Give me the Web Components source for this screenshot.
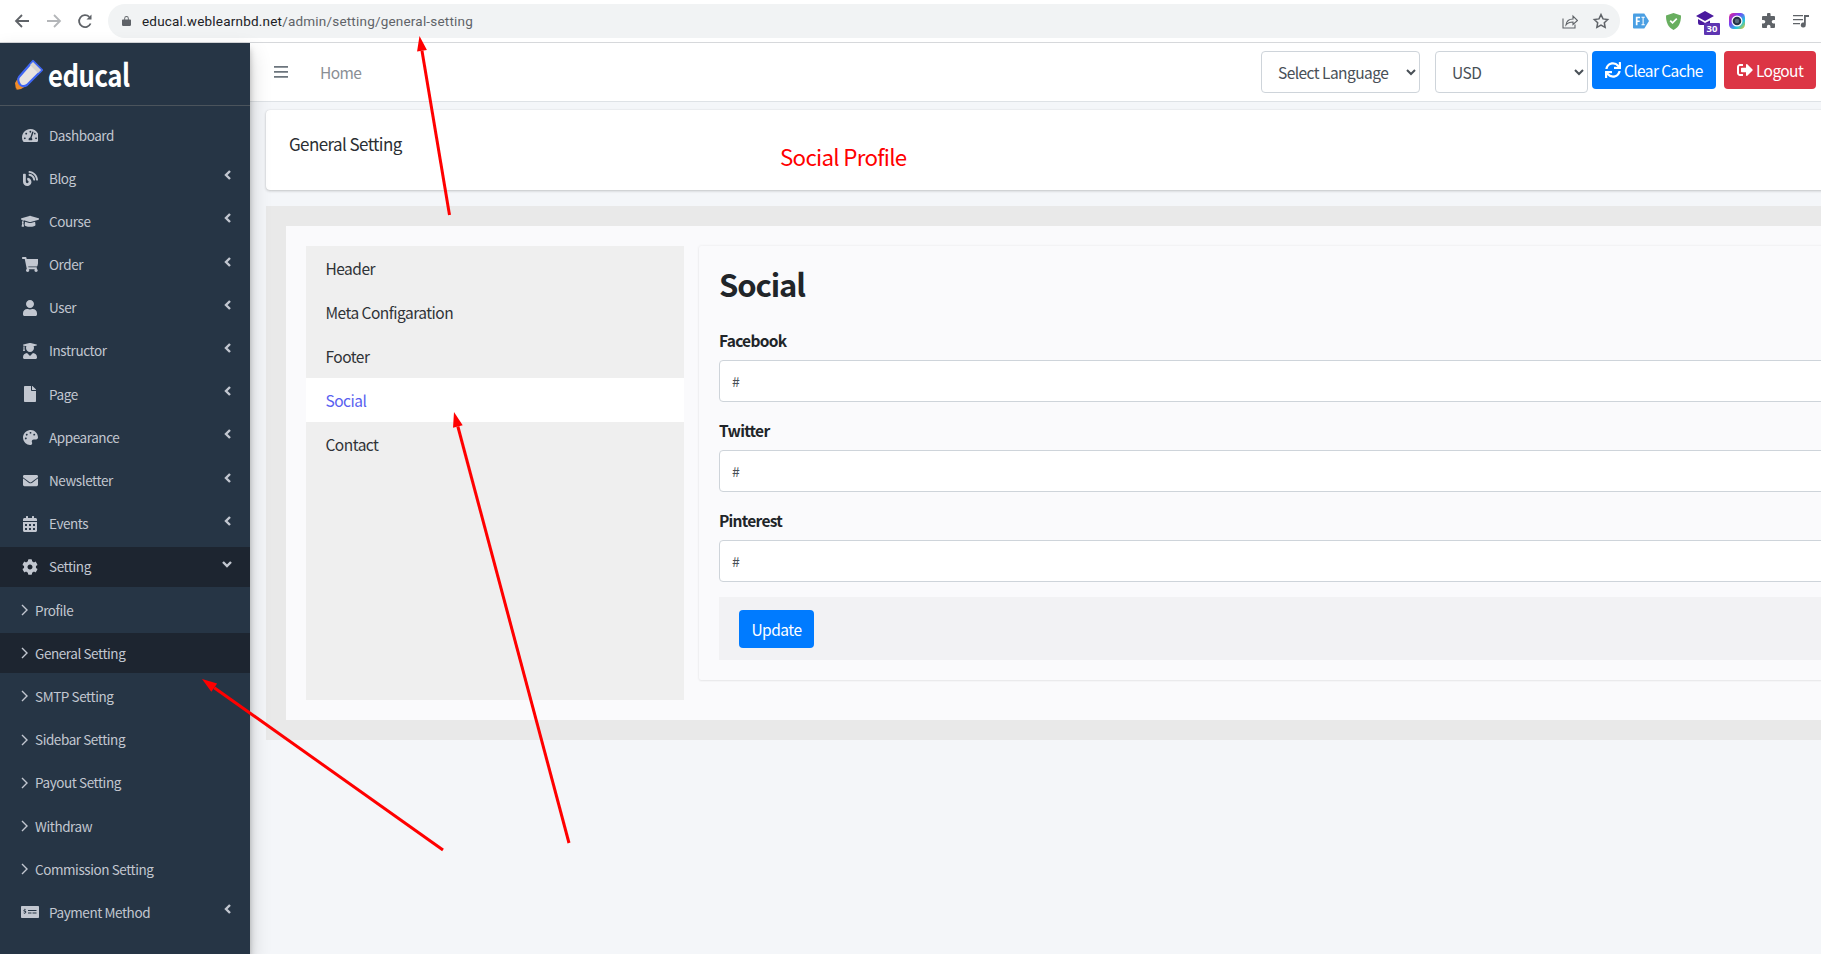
<!DOCTYPE html>
<html lang="en">
<head>
<meta charset="utf-8">
<title>General Setting</title>
<style>
  html, body { margin: 0; height: 954px; overflow: hidden; background: #fff; }
  body { font-family: "Noto Sans CJK SC", "Noto Sans", sans-serif; font-size: 15.5px; letter-spacing: -.48px; line-height: 24px; color: #212529; position: relative; }
  .row { display: flex; height: 911px; }
</style>
</head>
<body>
<browser-bar url-host="educal.weblearnbd.net" url-path="/admin/setting/general-setting"></browser-bar>
<div class="row">
  <side-nav>
    <side-item icon="dashboard">Dashboard</side-item>
    <side-item icon="blog" caret="left">Blog</side-item>
    <side-item icon="course" caret="left">Course</side-item>
    <side-item icon="cart" caret="left">Order</side-item>
    <side-item icon="user" caret="left">User</side-item>
    <side-item icon="instructor" caret="left">Instructor</side-item>
    <side-item icon="file" caret="left">Page</side-item>
    <side-item icon="palette" caret="left">Appearance</side-item>
    <side-item icon="mail" caret="left">Newsletter</side-item>
    <side-item icon="calendar" caret="left">Events</side-item>
    <side-item icon="cog" caret="down" active>Setting</side-item>
    <side-item sub>Profile</side-item>
    <side-item sub active>General Setting</side-item>
    <side-item sub>SMTP Setting</side-item>
    <side-item sub>Sidebar Setting</side-item>
    <side-item sub>Payout Setting</side-item>
    <side-item sub>Withdraw</side-item>
    <side-item sub>Commission Setting</side-item>
    <side-item icon="money" caret="left">Payment Method</side-item>
  </side-nav>
  <main-area>
    <top-nav slot="top"></top-nav>
    <title-card>General Setting</title-card>
    <settings-panel>
      <tab-list slot="tabs">
        <tab-link>Header</tab-link>
        <tab-link>Meta Configaration</tab-link>
        <tab-link>Footer</tab-link>
        <tab-link active>Social</tab-link>
        <tab-link>Contact</tab-link>
      </tab-list>
      <social-form slot="form">
        <form-field label="Facebook"></form-field>
        <form-field label="Twitter"></form-field>
        <form-field label="Pinterest"></form-field>
      </social-form>
    </settings-panel>
  </main-area>
</div>
<note-layer></note-layer>

<script>
const ICONS = {
  dashboard: ["0 0 576 512", "M288 32C128.94 32 0 160.94 0 320c0 52.8 14.25 102.26 39.06 144.8 5.61 9.62 16.3 15.2 27.44 15.2h443c11.14 0 21.83-5.58 27.44-15.2C561.75 422.26 576 372.8 576 320c0-159.06-128.94-288-288-288zm0 64c14.71 0 26.58 10.13 30.32 23.65-1.11 2.26-2.64 4.23-3.45 6.67l-9.22 27.67c-5.13 3.49-10.97 6.01-17.64 6.01-17.67 0-32-14.33-32-32S270.33 96 288 96zM96 384c-17.67 0-32-14.33-32-32s14.33-32 32-32 32 14.33 32 32-14.33 32-32 32zm48-160c-17.67 0-32-14.33-32-32s14.33-32 32-32 32 14.33 32 32-14.33 32-32 32zm246.77-72.41l-61.33 184C343.13 347.33 352 364.54 352 384c0 11.72-3.38 22.55-8.88 32H232.88c-5.5-9.45-8.88-20.28-8.88-32 0-33.94 26.5-61.43 59.9-63.59l61.34-184.01c4.17-12.56 17.73-19.45 30.36-15.17 12.57 4.19 19.35 17.79 15.17 30.36zm14.66 57.2l15.52-46.55c3.47-1.29 7.13-2.23 11.05-2.23 17.67 0 32 14.33 32 32s-14.33 32-32 32c-11.38-.01-20.89-6.28-26.57-15.22zM480 384c-17.67 0-32-14.33-32-32s14.33-32 32-32 32 14.33 32 32-14.33 32-32 32z"],
  blog: ["0 0 512 512", "M172.200 226.800c-14.600-2.900-28.200 8.900-28.200 23.800V301c0 10.200 7.100 18.400 16.700 22 18.200 6.800 31.300 24.400 31.300 45 0 26.500-21.500 48-48 48s-48-21.500-48-48V120c0-13.300-10.700-24-24-24H24c-13.300 0-24 10.700-24 24v248c0 89.500 82.100 160.200 175 140.700 54.400-11.400 98.300-55.400 109.700-109.700 17.400-82.900-37-157.200-112.500-172.200zM209 0c-9.200-.5-17 6.800-17 16v31.600c0 8.500 6.600 15.500 15 15.900 129.400 7 233.100 112 240.900 241.500.5 8.400 7.500 15 15.900 15h32.100c9.200 0 16.500-7.800 16-17C503.900 139.400 372.600 8 209 0zm.3 96c-9.300-.7-17.300 6.700-17.300 16.100v32.100c0 8.400 6.500 15.300 14.800 15.900 76.800 6.300 138 68.200 144.900 145.200.8 8.300 7.600 14.700 15.900 14.700h32.200c9.300 0 16.800-8 16.100-17.300-8.400-110.100-96.500-198.200-206.600-206.700z"],
  course: ["0 0 640 512", "M622.340 153.200L343.400 67.500c-15.200-4.670-31.600-4.670-46.790 0L17.660 153.200c-23.540 7.230-23.540 38.360 0 45.590l48.630 14.940c-10.670 13.190-17.230 29.280-17.880 46.900C38.780 266.150 32 276.110 32 288c0 10.780 5.680 19.850 13.860 25.650L20.330 428.530C18.110 438.520 25.710 448 35.940 448h56.110c10.240 0 17.840-9.480 15.620-19.470L82.140 313.650C90.320 307.850 96 298.780 96 288c0-11.570-6.470-21.250-15.660-26.870.76-15.020 8.440-28.300 20.690-36.720L296.600 284.500c9.060 2.780 26.440 6.250 46.790 0l278.950-85.700c23.550-7.240 23.550-38.370 0-45.600zM352.790 315.090c-28.530 8.760-52.840 3.920-65.590 0l-145.020-44.550L128 384c0 35.350 85.960 64 192 64s192-28.650 192-64l-14.180-113.470-145.030 44.560z"],
  cart: ["0 0 576 512", "M528.120 301.320l47.270-208C578.800 78.300 567.390 64 551.990 64H159.210l-9.170-44.810C147.760 8.020 137.930 0 126.530 0H24C10.750 0 0 10.750 0 24v16c0 13.250 10.750 24 24 24h69.880l70.250 343.430C147.320 417.100 136 435.220 136 456c0 30.930 25.070 56 56 56s56-25.070 56-56c0-15.670-6.440-29.830-16.810-40h209.630C430.440 426.170 424 440.330 424 456c0 30.930 25.070 56 56 56s56-25.070 56-56c0-22.170-12.890-41.330-31.580-50.410l5.520-24.280c3.410-15.020-8-29.310-23.400-29.310H218.170l-6.550-32h293.100c11.210 0 20.920-7.760 23.400-18.680z"],
  user: ["0 0 448 512", "M224 256c70.700 0 128-57.300 128-128S294.700 0 224 0 96 57.300 96 128s57.300 128 128 128zm89.600 32h-16.700c-22.200 10.200-46.900 16-72.900 16s-50.600-5.800-72.900-16h-16.700C60.200 288 0 348.200 0 422.400V464c0 26.500 21.500 48 48 48h352c26.500 0 48-21.500 48-48v-41.600c0-74.200-60.200-134.400-134.400-134.400z"],
  instructor: ["0 0 448 512", "M319.400 320.600L224 416l-95.400-95.400C57.100 323.700 0 382.200 0 454.400v9.600c0 26.500 21.500 48 48 48h352c26.500 0 48-21.500 48-48v-9.600c0-72.200-57.100-130.700-128.600-133.800zM13.600 79.800l6.400 1.500v58.400c-7 4.200-12 11.500-12 20.300 0 8.400 4.600 15.400 11.100 19.700L3.500 242c-1.700 6.900 2.100 14 7.600 14h41.800c5.500 0 9.300-7.100 7.600-14l-15.600-62.300C51.400 175.400 56 168.400 56 160c0-8.800-5-16.100-12-20.300V87.100l66 15.900c-8.600 17.200-14 36.400-14 57 0 70.700 57.300 128 128 128s128-57.300 128-128c0-20.600-5.300-39.800-14-57l96.300-23.200c18.200-4.400 18.200-27.100 0-31.500l-190.400-46c-13-3.100-26.700-3.100-39.700 0L13.600 48.200c-18.100 4.400-18.100 27.200 0 31.600z"],
  file: ["0 0 384 512", "M224 136V0H24C10.700 0 0 10.700 0 24v464c0 13.300 10.700 24 24 24h336c13.300 0 24-10.700 24-24V160H248c-13.200 0-24-10.800-24-24zm160-14.100v6.100H256V0h6.100c6.400 0 12.500 2.500 17 7l97.900 98c4.500 4.500 7 10.600 7 16.900z"],
  palette: ["0 0 512 512", "M204.300 5C104.900 24.400 24.800 104.300 5.200 203.400c-37 187 131.700 326.400 258.800 306.700 41.200-6.400 61.400-54.600 42.500-91.700-23.100-45.400 9.900-98.400 60.900-98.400h79.700c35.800 0 64.800-29.600 64.900-65.300C511.500 97.100 368.100-26.900 204.300 5zM96 320c-17.700 0-32-14.300-32-32s14.300-32 32-32 32 14.300 32 32-14.300 32-32 32zm32-128c-17.700 0-32-14.300-32-32s14.300-32 32-32 32 14.300 32 32-14.300 32-32 32zm128-64c-17.700 0-32-14.300-32-32s14.300-32 32-32 32 14.300 32 32-14.300 32-32 32zm128 64c-17.700 0-32-14.300-32-32s14.300-32 32-32 32 14.300 32 32-14.300 32-32 32z"],
  mail: ["0 0 512 512", "M502.300 190.800c3.900-3.100 9.700-.2 9.700 4.700V400c0 26.500-21.500 48-48 48H48c-26.500 0-48-21.500-48-48V195.600c0-5 5.700-7.800 9.700-4.700 22.400 17.400 52.100 39.500 154.100 113.600 21.100 15.400 56.700 47.800 92.200 47.600 35.700.3 72-32.800 92.300-47.600 102-74.100 131.600-96.300 154-113.700zM256 320c23.200.4 56.600-29.200 73.400-41.400 132.700-96.300 142.800-104.700 173.400-128.700 5.800-4.500 9.200-11.500 9.200-18.900v-19c0-26.500-21.500-48-48-48H48C21.500 64 0 85.500 0 112v19c0 7.400 3.400 14.300 9.200 18.900 30.600 23.900 40.700 32.400 173.400 128.700 16.800 12.200 50.200 41.800 73.400 41.400z"],
  calendar: ["0 0 448 512", "M0 464c0 26.500 21.500 48 48 48h352c26.500 0 48-21.500 48-48V192H0v272zm320-196c0-6.600 5.400-12 12-12h40c6.600 0 12 5.400 12 12v40c0 6.600-5.400 12-12 12h-40c-6.600 0-12-5.400-12-12v-40zm0 128c0-6.600 5.400-12 12-12h40c6.600 0 12 5.400 12 12v40c0 6.600-5.400 12-12 12h-40c-6.600 0-12-5.400-12-12v-40zM192 268c0-6.600 5.400-12 12-12h40c6.600 0 12 5.400 12 12v40c0 6.600-5.400 12-12 12h-40c-6.600 0-12-5.400-12-12v-40zm0 128c0-6.600 5.400-12 12-12h40c6.600 0 12 5.400 12 12v40c0 6.600-5.400 12-12 12h-40c-6.600 0-12-5.400-12-12v-40zM64 268c0-6.600 5.400-12 12-12h40c6.600 0 12 5.400 12 12v40c0 6.600-5.400 12-12 12H76c-6.600 0-12-5.400-12-12v-40zm0 128c0-6.600 5.400-12 12-12h40c6.600 0 12 5.400 12 12v40c0 6.600-5.400 12-12 12H76c-6.600 0-12-5.400-12-12v-40zM400 64h-48V16c0-8.800-7.200-16-16-16h-32c-8.800 0-16 7.200-16 16v48H160V16c0-8.800-7.200-16-16-16h-32c-8.800 0-16 7.200-16 16v48H48C21.500 64 0 85.500 0 112v48h448v-48c0-26.500-21.500-48-48-48z"],
  cog: ["0 0 512 512", "M487.400 315.700l-42.600-24.600c4.300-23.200 4.300-47 0-70.200l42.600-24.600c4.900-2.800 7.100-8.600 5.500-14-11.100-35.600-30-67.800-54.700-94.600-3.800-4.100-10-5.100-14.800-2.300L380.800 110c-17.900-15.400-38.500-27.300-60.800-35.100V25.800c0-5.600-3.900-10.500-9.400-11.700-36.700-8.200-74.300-7.800-109.200 0-5.500 1.200-9.400 6.100-9.400 11.700V75c-22.200 7.900-42.800 19.800-60.800 35.100L88.700 85.500c-4.900-2.800-11-1.900-14.800 2.300-24.700 26.700-43.600 58.900-54.700 94.600-1.700 5.400.6 11.200 5.500 14L67.300 221c-4.300 23.200-4.300 47 0 70.200l-42.600 24.600c-4.900 2.800-7.100 8.600-5.500 14 11.100 35.600 30 67.800 54.700 94.600 3.800 4.100 10 5.100 14.800 2.300l42.600-24.600c17.900 15.400 38.500 27.300 60.800 35.100v49.200c0 5.600 3.900 10.500 9.400 11.700 36.700 8.200 74.300 7.800 109.200 0 5.500-1.200 9.400-6.100 9.400-11.700v-49.200c22.200-7.900 42.800-19.800 60.800-35.100l42.600 24.600c4.900 2.800 11 1.900 14.800-2.300 24.700-26.700 43.600-58.900 54.700-94.600 1.500-5.500-.7-11.300-5.600-14.100zM256 336c-44.100 0-80-35.900-80-80s35.900-80 80-80 80 35.900 80 80-35.900 80-80 80z"],
  money: ["0 0 36 24", "M1.500 0h33c.8 0 1.500.7 1.500 1.500v21c0 .8-.7 1.500-1.500 1.500h-33C.7 24 0 23.300 0 22.500v-21C0 .7.700 0 1.500 0zM7 5.500v1.300c-1.300.2-2.200 1.200-2.200 2.400 0 1.300 1 2.100 2.400 2.500 1 .3 1.300.6 1.300 1s-.4.8-1.100.8c-.7 0-1.400-.3-1.900-.7l-.7 1.200c.5.400 1.300.7 2.200.8V16h1.300v-1.300c1.300-.3 2.200-1.200 2.200-2.500s-.9-2.100-2.400-2.600c-1-.3-1.300-.5-1.300-.9s.4-.7 1-.7.1.3 1.700.6l.6-1.200c-.5-.3-1.200-.5-1.800-.6V5.500zM14 8v2h17V8zm0 5v2h7v-2zm9 0v2h8v-2z"],
  sync: ["0 0 512 512", "M440.650 12.570l4 82.770A247.160 247.160 0 0 0 255.830 8C134.730 8 33.910 94.920 12.290 209.820A12 12 0 0 0 24.090 224h49.050a12 12 0 0 0 11.670-9.260 175.910 175.910 0 0 1 317-56.940l-101.460-4.860a12 12 0 0 0-12.570 12v47.410a12 12 0 0 0 12 12H500a12 12 0 0 0 12-12V12a12 12 0 0 0-12-12h-47.370a12 12 0 0 0-11.980 12.570zM255.830 432a175.610 175.610 0 0 1-146-77.800l101.800 4.870a12 12 0 0 0 12.570-12v-47.400a12 12 0 0 0-12-12H12a12 12 0 0 0-12 12V500a12 12 0 0 0 12 12h47.350a12 12 0 0 0 12-12.600l-4.150-82.570A247.170 247.170 0 0 0 255.830 504c121.110 0 221.930-86.920 243.550-201.820a12 12 0 0 0-11.800-14.180h-49.050a12 12 0 0 0-11.670 9.260A175.860 175.860 0 0 1 255.830 432z"],
  signout: ["0 0 512 512", "M180 448H96c-53 0-96-43-96-96V160c0-53 43-96 96-96h84c6.600 0 12 5.400 12 12v40c0 6.600-5.400 12-12 12H96c-17.700 0-32 14.300-32 32v192c0 17.700 14.300 32 32 32h84c6.600 0 12 5.400 12 12v40c0 6.600-5.400 12-12 12zM497 273L329 441c-15 15-41 4.500-41-17v-96H152c-13.300 0-24-10.700-24-24v-96c0-13.300 10.700-24 24-24h136V88c0-21.400 25.900-32 41-17l168 168c9.300 9.400 9.300 24.600 0 34z"],
};

function iconSvg(name, size) {
  const [box, d] = ICONS[name];
  const [, , w, h] = box.split(" ").map(Number);
  const width = (size * w) / h;
  return `<svg viewBox="${box}" width="${width}" height="${size}" fill="currentColor" aria-hidden="true"><path d="${d}"/></svg>`;
}

class BrowserBar extends HTMLElement {
  connectedCallback() {
    this.attachShadow({ mode: "open" });
    this.shadowRoot.innerHTML = `
      <style>
        :host { display: flex; align-items: center; height: 42px; border-bottom: 1px solid #d6d8db; background: #fff; font-family: "Roboto", "Noto Sans", sans-serif; letter-spacing: 0; position: relative; }
        .nav { display: flex; align-items: center; gap: 14px; padding-left: 13px; width: 108px; flex: none; box-sizing: border-box; }
        .nav svg { display: block; }
        .omni { flex: none; width: 1512px; height: 34px; margin-top: -1px; border-radius: 17px; background: #f1f3f4; display: flex; align-items: center; box-sizing: border-box; padding: 0 10px 0 14px; }
        .lock { margin-right: 11px; flex: none; }
        .url { font-size: 13.5px; letter-spacing: .2px; color: #5f6368; flex: 1; white-space: nowrap; }
        .url b { font-weight: 400; color: #202124; }
        .omni .end { display: flex; align-items: center; gap: 14px; }
        .ext { display: grid; grid-template-columns: repeat(6, 32px); align-items: center; justify-items: center; padding-left: 5px; flex: none; }
        .ext > * { display: block; }
        .cap { position: absolute; left: 1704px; top: 23px; width: 16px; height: 12px; background: #5e35b1; border-radius: 1px; color: #fff; font: 700 9.500px/12px "Noto Sans", sans-serif; text-align: center; }
      </style>
      <div class="nav">
        <svg width="18" height="18" viewBox="0 0 18 18" fill="none" stroke="#5f6368" stroke-width="1.800"><path d="M16 9H3M9 3 3 9l6 6"/></svg>
        <svg width="18" height="18" viewBox="0 0 18 18" fill="none" stroke="#b4b6b9" stroke-width="1.800"><path d="M2 9h13M9 3l6 6-6 6"/></svg>
        <svg width="16" height="16" viewBox="0 0 16 16" fill="none" stroke="#5f6368" stroke-width="1.800"><path d="M13.600 10.500A6 6 0 1 1 12.300 3.800"/><path d="M14.500 1.500v5h-5z" fill="#5f6368" stroke="none"/></svg>
      </div>
      <div class="omni">
        <svg class="lock" width="9" height="11" viewBox="0 0 10 12"><path fill="#5f6368" d="M2.500 5V3.500a2.500 2.500 0 0 1 5 0V5H9c.5 0 1 .5 1 1v5c0 .5-.5 1-1 1H1c-.5 0-1-.5-1-1V6c0-.5.5-1 1-1zm1 0h3V3.500a1.500 1.500 0 0 0-3 0z"/></svg>
        <span class="url"><b>${this.getAttribute("url-host")}</b>${this.getAttribute("url-path")}</span>
        <div class="end">
          <svg width="16" height="16" viewBox="0 0 16 16" fill="none" stroke="#5f6368" stroke-width="1.100"><path d="M1 5.500V15h12v-3.500"/><path d="M4 12c.5-4 3-6 7-6V3l4.500 4.500L11 11.500V9c-3 0-5 .5-7 3z"/></svg>
          <svg width="18" height="18" viewBox="0 0 24 24" fill="none" stroke="#5f6368" stroke-width="2"><path d="M12 3.500l2.700 5.700 6.200.8-4.500 4.300 1.100 6.200L12 17.500l-5.500 3 1.100-6.200L3.100 10l6.200-.8z"/></svg>
        </div>
      </div>
      <div class="ext">
        <svg width="16" height="16" viewBox="0 0 17 16"><path fill="#4a9fe3" d="M1 0h11l5 8-5 8H1a1 1 0 0 1-1-1V1a1 1 0 0 1 1-1z"/><path fill="#fff" d="M3 3.500h4.500v1.600H4.800v2.300h2.300V9H4.800v3.500H3zM9 3.500h3.500v1H11.300v7h1.200v1H9v-1h1.200v-7H9z"/></svg>
        <svg width="15" height="17" viewBox="0 0 16 18"><path fill="#68ae5f" d="M8 0l8 2.500c0 7-2 12.500-8 15.500C2 15 0 9.500 0 2.500z"/><path fill="none" stroke="#fff" stroke-width="1.800" d="M4.500 8l2.500 2.500 4.500-4.500"/></svg>
        <svg width="18" height="15" viewBox="0 0 18 15" style="margin-top:-5px"><path fill="#4a1a9e" d="M9 0l9 5-9 5-9-5zM2 8l7 4 5-2.500V14H4a2 2 0 0 1-2-2z"/></svg>
        <svg width="16" height="16" viewBox="0 0 16 16"><defs><linearGradient id="g" x1="0" y1="0" x2="1" y2="1"><stop offset="0" stop-color="#e91e8c"/><stop offset=".35" stop-color="#7b3ff2"/><stop offset=".7" stop-color="#1ec8e0"/><stop offset="1" stop-color="#f5c518"/></linearGradient></defs><rect width="16" height="16" rx="4.500" fill="url(#g)"/><circle cx="8" cy="8" r="5.500" fill="#fff"/><circle cx="8" cy="8" r="4.300" fill="#263545"/><circle cx="8" cy="8" r="2.200" fill="#5a6b7d"/></svg>
        <svg width="16" height="16" viewBox="0 0 16 16"><path fill="#5f6368" d="M6 1.500a1.800 1.800 0 0 1 3.600 0V3H13a1 1 0 0 1 1 1v3h-1.500a1.800 1.800 0 0 0 0 3.600H14V14a1 1 0 0 1-1 1H9.500v-1.500a1.800 1.800 0 0 0-3.600 0V15H2a1 1 0 0 1-1-1v-3.500h1.500a1.800 1.800 0 0 0 0-3.600H1V4a1 1 0 0 1 1-1h4z"/></svg>
        <svg width="16" height="14" viewBox="0 0 16 14"><path fill="#5f6368" d="M0 1h10v1.300H0zM0 5h10v1.300H0zM0 9h7v1.300H0zM11 1h5v2h-3.200v8a2.500 2.500 0 1 1-1.800-2.400z"/></svg>
      </div>
      <div class="cap">30</div>
    `;
  }
}

class SideNav extends HTMLElement {
  connectedCallback() {
    this.attachShadow({ mode: "open" });
    this.shadowRoot.innerHTML = `
      <style>
        :host { display: block; flex: none; width: 250px; background: #263545; box-shadow: 0 10px 20px rgba(0,0,0,.19), 0 6px 6px rgba(0,0,0,.23); position: relative; z-index: 2; }
        .brand { display: flex; align-items: center; height: 62px; padding-left: 14px; border-bottom: 1px solid #4b545c; gap: 4px; }
        .brand span { display: inline-block; font-size: 31px; font-weight: 700; color: #fff; letter-spacing: -.6px; line-height: 40px; transform: scaleX(.83); transform-origin: left center; }
        .brand svg { display: block; margin-top: 2px; flex: none; }
        nav { padding-top: 9px; }
      </style>
      <div class="brand">
        <svg width="30" height="32" viewBox="0 0 30 32">
          <path fill="#f28c28" d="M2 31 1 24l3-5 8 8-5 3z"/>
          <path fill="#3a3a3a" d="M1 31l-.5-3 3 2.500z"/>
          <path fill="#e8e4e0" stroke="#3f66f2" stroke-width="2.200" stroke-linejoin="round" d="M5 18 19 2l9 9-15 15c-3 2-6 1-7-.5S3 21 5 18z"/>
          <path fill="#d6d2ce" d="M19 3l8 8-3 3-8-8z"/>
        </svg>
        <span>educal</span>
      </div>
      <nav><slot></slot></nav>
    `;
  }
}

class SideItem extends HTMLElement {
  connectedCallback() {
    this.attachShadow({ mode: "open" });
    const sub = this.hasAttribute("sub");
    const icon = this.getAttribute("icon");
    const caret = this.getAttribute("caret");
    const sizes = { cart: 15, money: 12, dashboard: 15, course: 14.5, blog: 15, palette: 15, mail: 15 };
    const ico = sub
      ? `<svg class="chev" width="7" height="12" viewBox="0 0 7 12" fill="none" stroke="currentColor" stroke-width="1.400"><path d="M1 1l5 5-5 5"/></svg>`
      : `<span class="ico">${iconSvg(icon, sizes[icon] || 16)}</span>`;
    const end = caret === "left"
      ? `<svg class="caret" width="7" height="10" viewBox="0 0 7 10" fill="none" stroke="currentColor" stroke-width="2.400"><path d="M6 1 2 5l4 4"/></svg>`
      : caret === "down"
      ? `<svg class="caret down" width="10" height="7" viewBox="0 0 10 7" fill="none" stroke="currentColor" stroke-width="2.400"><path d="M1 1l4 4 4-4"/></svg>`
      : "";
    this.shadowRoot.innerHTML = `
      <style>
        :host { display: flex; align-items: center; height: 40px; margin-bottom: 3.2px; color: #c2c7d0; font-size: 13.5px; letter-spacing: -.42px; position: relative; padding-left: ${sub ? 21 : 20}px; box-sizing: border-box; }
        :host([active]) { background: #1d2530; }
        .ico { width: 20px; margin-right: 9px; display: flex; justify-content: center; flex: none; }
        .ico svg { display: block; }
        .chev { margin-right: 7px; display: block; flex: none; }
        .text { line-height: 24px; white-space: nowrap; padding-bottom: 1px; }
        .caret { position: absolute; right: 19px; top: 12px; }
        .caret.down { right: 18px; top: 14px; }
      </style>
      ${ico}<span class="text"><slot></slot></span>${end}
    `;
  }
}

class MainArea extends HTMLElement {
  connectedCallback() {
    this.attachShadow({ mode: "open" });
    this.shadowRoot.innerHTML = `
      <style>
        :host { display: block; flex: 1; min-width: 0; background: #f4f6f9; overflow: hidden; }
        .body { padding: 8px 0 0 16px; width: 1700px; }
      </style>
      <slot name="top"></slot>
      <div class="body"><slot></slot></div>
    `;
  }
}

class TopNav extends HTMLElement {
  connectedCallback() {
    this.attachShadow({ mode: "open" });
    this.shadowRoot.innerHTML = `
      <style>
        :host { display: flex; align-items: flex-start; height: 58px; box-sizing: content-box; background: #fff; border-bottom: 1px solid #dee2e6; padding-right: 5px; }
        .burger { margin: 22px 0 0 24px; width: 14px; height: 14px; display: block; flex: none; }
        .home { margin: 17px 0 0 32px; color: #8a8f95; letter-spacing: -.6px; }
        .spacer { flex: 1; }
        select { height: 42px; margin-top: 8px; box-sizing: border-box; border: 1px solid #ced4da; border-radius: 4px; background: #fff; color: #495057; font: inherit; letter-spacing: -.55px; padding: 0 12px; }
        .lang { width: 159px; margin-right: 15px; }
        .cur { width: 153px; margin-right: 4px; }
        button { height: 38px; margin-top: 8px; border: 1px solid transparent; border-radius: 4px; color: #fff; font: inherit; letter-spacing: -.6px; padding: 0 12px; display: flex; align-items: center; gap: 3px; white-space: nowrap; }
        .blue { background: #007bff; width: 124px; margin-right: 8px; }
        .red { background: #dc3545; width: 92px; }
        button svg { display: block; flex: none; }
      </style>
      <svg class="burger" viewBox="0 0 14 14" fill="#6c757d"><path d="M0 1h14v1.800H0zM0 6h14v1.800H0zM0 11h14v1.800H0z"/></svg>
      <span class="home">Home</span>
      <span class="spacer"></span>
      <select class="lang"><option>Select Language</option></select>
      <select class="cur"><option>USD</option></select>
      <button class="blue">${iconSvg("sync", 16)}Clear Cache</button>
      <button class="red">${iconSvg("signout", 16)}Logout</button>
    `;
  }
}

class TitleCard extends HTMLElement {
  connectedCallback() {
    this.attachShadow({ mode: "open" });
    this.shadowRoot.innerHTML = `
      <style>
        :host { display: block; height: 80px; box-sizing: border-box; padding: 22px 23px; background: #fff; border-radius: 4px; box-shadow: 0 0 1px rgba(0,0,0,.125), 0 1px 3px rgba(0,0,0,.2); margin-bottom: 16px; font-size: 17px; letter-spacing: -.6px; color: #2b2f33; }
      </style>
      <slot></slot>
    `;
  }
}

class SettingsPanel extends HTMLElement {
  connectedCallback() {
    this.attachShadow({ mode: "open" });
    this.shadowRoot.innerHTML = `
      <style>
        :host { display: block; background: #e9e9e9; padding: 20px; }
        .inner { display: flex; gap: 15px; align-items: flex-start; background: #fafafc; padding: 20px; }
      </style>
      <div class="inner"><slot name="tabs"></slot><slot name="form"></slot></div>
    `;
  }
}

class TabList extends HTMLElement {
  connectedCallback() {
    this.attachShadow({ mode: "open" });
    this.shadowRoot.innerHTML = `
      <style>
        :host { display: block; flex: none; width: 378px; height: 454px; background: #efefef; }
      </style>
      <slot></slot>
    `;
  }
}

class TabLink extends HTMLElement {
  connectedCallback() {
    this.attachShadow({ mode: "open" });
    this.shadowRoot.innerHTML = `
      <style>
        :host { display: block; height: 44px; line-height: 44px; padding-left: 19.5px; color: #2f3337; letter-spacing: -.52px; }
        :host([active]) { background: #fff; color: #5a5ff0; }
      </style>
      <slot></slot>
    `;
  }
}

class SocialForm extends HTMLElement {
  connectedCallback() {
    this.attachShadow({ mode: "open" });
    this.shadowRoot.innerHTML = `
      <style>
        :host { display: block; flex: 1; min-width: 0; padding: 20px; background: #fafafc; box-shadow: 0 0 3px rgba(0,0,0,.08), 0 1px 2px rgba(0,0,0,.05); border-radius: 2px; }
        h2 { margin: -1px 0 25px; font-size: 31px; letter-spacing: -1.1px; line-height: 38px; font-weight: 700; color: #212529; }
        .bar { background: #f2f2f4; padding: 13px 20px 12px; margin-top: -1px; }
        button { display: block; width: 75px; height: 38px; border: 0; border-radius: 4px; background: #007bff; color: #fff; font: inherit; letter-spacing: -.48px; padding: 0; }
      </style>
      <h2>Social</h2>
      <slot></slot>
      <div class="bar"><button>Update</button></div>
    `;
  }
}

class FormField extends HTMLElement {
  connectedCallback() {
    this.attachShadow({ mode: "open" });
    this.shadowRoot.innerHTML = `
      <style>
        :host { display: block; margin-bottom: 16px; }
        label { display: block; font-weight: 700; margin-bottom: 8px; line-height: 24px; font-size: 15.5px; letter-spacing: -.72px; color: #212529; }
        input { display: block; width: 100%; height: 42px; box-sizing: border-box; border: 1px solid #ced4da; border-radius: 4px; padding: 0 12px; background: #fff; color: #495057; font: 14px/24px "Noto Sans CJK SC", sans-serif; }
      </style>
      <label>${this.getAttribute("label")}</label>
      <input type="text" value="#">
    `;
  }
}

class NoteLayer extends HTMLElement {
  connectedCallback() {
    this.attachShadow({ mode: "open" });
    const arrow = (x1, y1, x2, y2) => {
      const a = Math.atan2(y2 - y1, x2 - x1);
      const len = 15, half = 5;
      const bx = x2 - len * Math.cos(a), by = y2 - len * Math.sin(a);
      const nx = -Math.sin(a) * half, ny = Math.cos(a) * half;
      return `<path d="M${x1} ${y1}L${bx} ${by}" stroke="#f00" stroke-width="3"/>
        <polygon fill="#f00" points="${x2},${y2} ${bx + nx},${by + ny} ${bx - nx},${by - ny}"/>`;
    };
    this.shadowRoot.innerHTML = `
      <style>
        :host { position: absolute; inset: 0; z-index: 5; pointer-events: none; }
        svg { position: absolute; inset: 0; }
        .label { position: absolute; left: 780px; top: 139px; font-size: 22.3px; letter-spacing: -.7px; line-height: 34px; color: #f00; white-space: nowrap; }
      </style>
      <svg width="1821" height="954">
        ${arrow(449.5, 215, 419.5, 36)}
        ${arrow(569, 843, 454, 412)}
        ${arrow(443, 850, 202, 679)}
      </svg>
      <div class="label">Social Profile</div>
    `;
  }
}

customElements.define("browser-bar", BrowserBar);
customElements.define("side-nav", SideNav);
customElements.define("side-item", SideItem);
customElements.define("main-area", MainArea);
customElements.define("top-nav", TopNav);
customElements.define("title-card", TitleCard);
customElements.define("settings-panel", SettingsPanel);
customElements.define("tab-list", TabList);
customElements.define("tab-link", TabLink);
customElements.define("social-form", SocialForm);
customElements.define("form-field", FormField);
customElements.define("note-layer", NoteLayer);
</script>
</body>
</html>
